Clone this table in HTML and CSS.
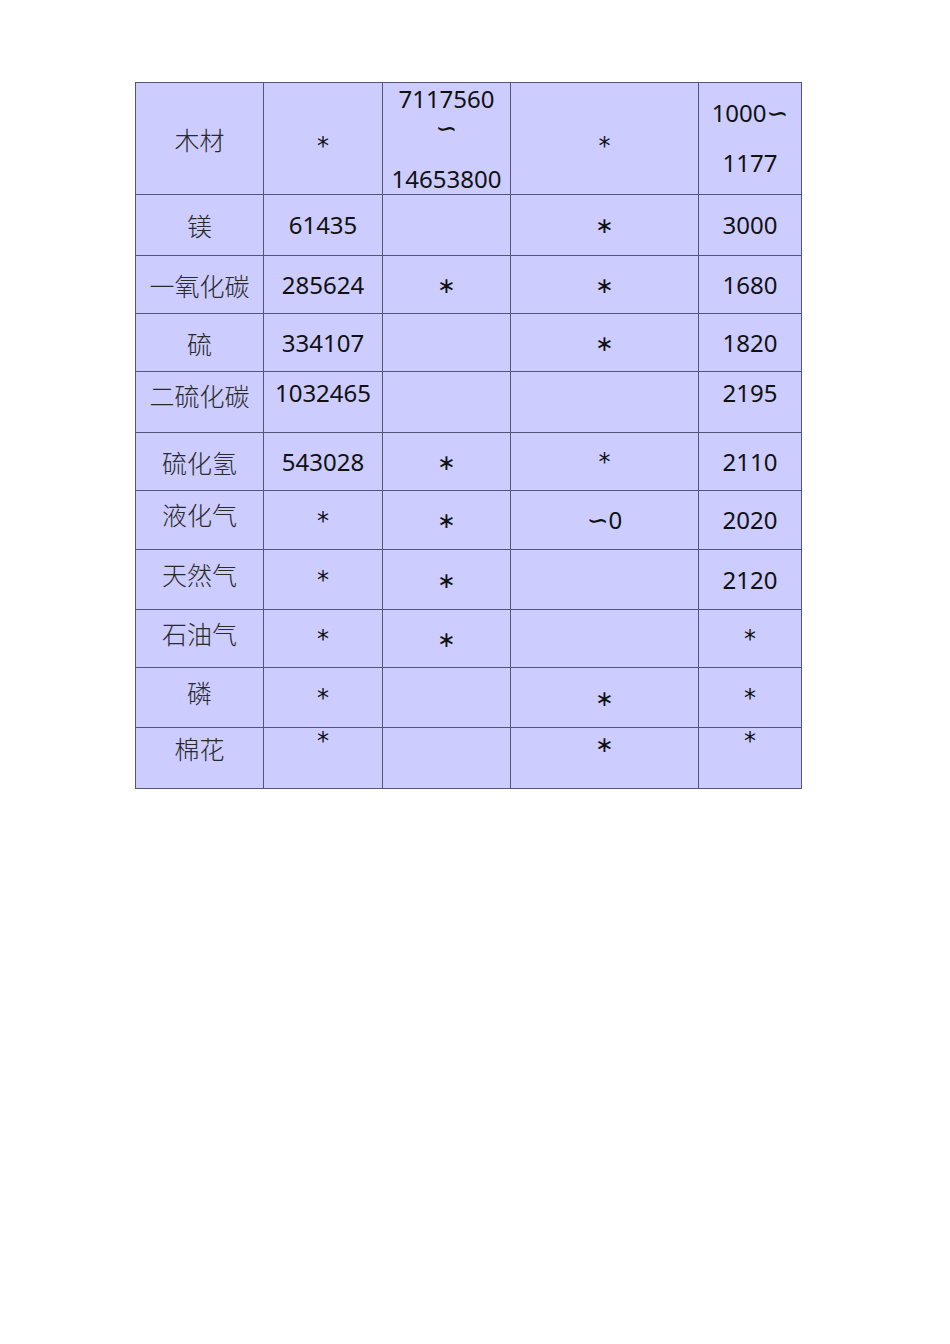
FILE: index.html
```html
<!DOCTYPE html>
<html lang="zh">
<head>
<meta charset="utf-8">
<title>表</title>
<link rel="stylesheet" href="styles.css">
</head>
<body>
<table class="grid">
  <colgroup>
    <col class="c1"><col class="c2"><col class="c3"><col class="c4"><col class="c5">
  </colgroup>
  <tbody>
    <tr class="r1">
      <td class="zh">木材</td>
      <td class="lo"><span class="ast">*</span></td>
      <td><div class="stack"><span class="line">7117560</span><span class="wave">∽</span><span class="line last">14653800</span></div></td>
      <td class="lo"><span class="ast">*</span></td>
      <td><div class="pair"><span>1000<span class="tl">∽</span></span><span>1177</span></div></td>
    </tr>
    <tr class="r2">
      <td class="zh">镁</td>
      <td>61435</td>
      <td></td>
      <td><span class="ast2">∗</span></td>
      <td>3000</td>
    </tr>
    <tr class="r3">
      <td class="zh">一氧化碳</td>
      <td>285624</td>
      <td><span class="ast2">∗</span></td>
      <td><span class="ast2">∗</span></td>
      <td>1680</td>
    </tr>
    <tr class="r4">
      <td class="zh">硫</td>
      <td>334107</td>
      <td></td>
      <td><span class="ast2">∗</span></td>
      <td>1820</td>
    </tr>
    <tr class="r5">
      <td class="zh up2">二硫化碳</td>
      <td class="up3">1032465</td>
      <td></td>
      <td></td>
      <td class="up3">2195</td>
    </tr>
    <tr class="r6">
      <td class="zh">硫化氢</td>
      <td>543028</td>
      <td><span class="ast2">∗</span></td>
      <td><span class="ast">*</span></td>
      <td>2110</td>
    </tr>
    <tr class="r7">
      <td class="zh up">液化气</td>
      <td><span class="ast">*</span></td>
      <td><span class="ast2">∗</span></td>
      <td><span class="tl">∽</span>0</td>
      <td>2020</td>
    </tr>
    <tr class="r8">
      <td class="zh up">天然气</td>
      <td><span class="ast">*</span></td>
      <td><span class="ast2">∗</span></td>
      <td></td>
      <td>2120</td>
    </tr>
    <tr class="r9">
      <td class="zh up">石油气</td>
      <td><span class="ast">*</span></td>
      <td><span class="ast2">∗</span></td>
      <td></td>
      <td><span class="ast">*</span></td>
    </tr>
    <tr class="r10">
      <td class="zh up">磷</td>
      <td><span class="ast">*</span></td>
      <td></td>
      <td><span class="ast2">∗</span></td>
      <td><span class="ast">*</span></td>
    </tr>
    <tr class="r11">
      <td class="zh up4">棉花</td>
      <td class="top"><span class="ast">*</span></td>
      <td></td>
      <td class="top2"><span class="ast2">∗</span></td>
      <td class="top"><span class="ast">*</span></td>
    </tr>
  </tbody>
</table>
</body>
</html>
```
FILE: styles.css
```css
html, body {
  margin: 0;
  padding: 0;
  background: #ffffff;
}

body {
  font-family: "Noto Sans", "Open Sans", "Noto Sans CJK SC", sans-serif;
  font-size: 24px;
  color: #111111;
}

.grid {
  border-collapse: collapse;
  table-layout: fixed;
  width: 666px;
  margin: 82px 0 0 135px;
  background: #ccccff;
}

.c1 { width: 128px; }
.c2 { width: 119px; }
.c3 { width: 128px; }
.c4 { width: 188px; }
.c5 { width: 103px; }

.grid td {
  border: 1px solid #55557a;
  padding: 0;
  text-align: center;
  vertical-align: middle;
  line-height: 30px;
  white-space: nowrap;
}

.r1 { height: 111px; }
.r2 { height: 61px; }
.r3 { height: 58px; }
.r4 { height: 58px; }
.r5 { height: 61px; }
.r6 { height: 58px; }
.r7 { height: 59px; }
.r8 { height: 60px; }
.r9 { height: 58px; }
.r10 { height: 60px; }
.r11 { height: 61px; }

.grid td.zh {
  font-family: "Noto Sans CJK SC", sans-serif;
  font-size: 25px;
  font-weight: 300;
  color: #2a2a2a;
}

.grid td.lo {
  padding-top: 14px;
}

.grid td.up {
  padding-bottom: 12px;
}

.grid td.up2 {
  padding-bottom: 14px;
}

.grid td.up3 {
  padding-bottom: 18px;
}

.grid td.up4 {
  padding-bottom: 20px;
}

.grid td.top {
  vertical-align: top;
  padding-top: 0;
  line-height: 24px;
}

.grid td.top2 {
  vertical-align: top;
  padding-top: 0;
}

.ast {
  font-family: "DejaVu Sans", sans-serif;
  font-size: 24px;
}

.ast2 {
  font-family: "DejaVu Sans", sans-serif;
  font-size: 22px;
}

.tl {
  font-family: "DejaVu Sans", sans-serif;
  font-size: 26px;
  line-height: 0;
}

.stack {
  height: 111px;
  display: flex;
  flex-direction: column;
  justify-content: center;
}

.stack .line {
  line-height: 40px;
}

.stack .last {
  margin-top: 22px;
}

.stack .wave {
  font-family: "DejaVu Sans", sans-serif;
  font-size: 26px;
  line-height: 18px;
}

.pair {
  display: flex;
  flex-direction: column;
  line-height: 50px;
  padding-bottom: 2px;
}
```
